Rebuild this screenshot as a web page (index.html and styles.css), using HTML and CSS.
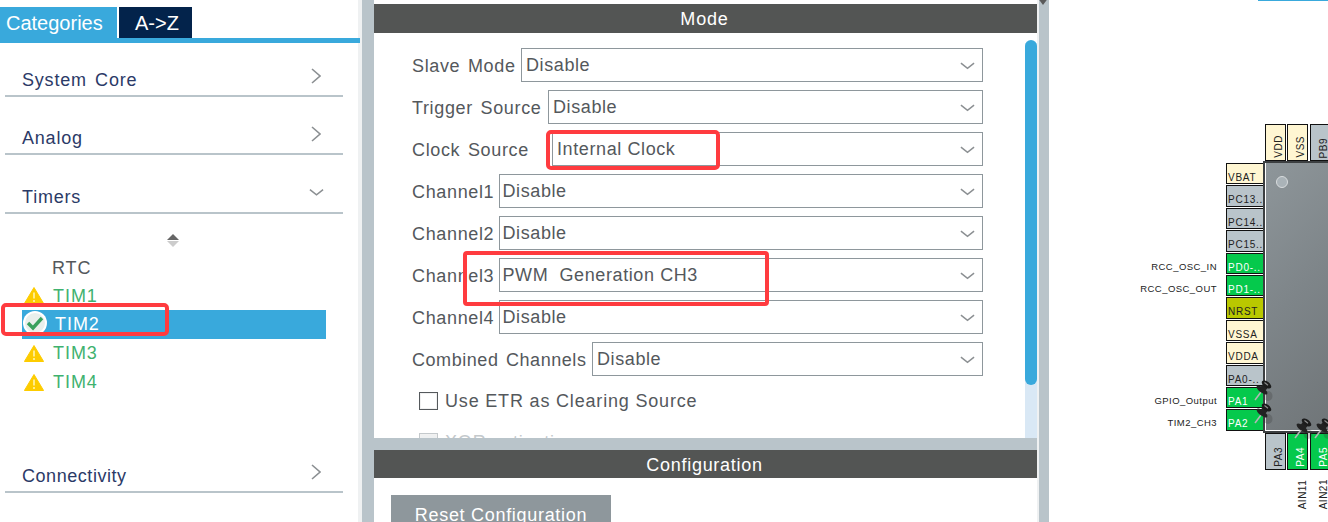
FILE: index.html
```html
<!DOCTYPE html>
<html lang="en">
<head>
<meta charset="utf-8">
<title>Pinout</title>
<link rel="stylesheet" href="styles.css">
</head>
<body>
<svg class="defs" width="0" height="0" aria-hidden="true">
  <defs>
    <symbol id="warn" viewBox="0 0 20 17">
      <path d="M10 0.5 L19.6 16.5 L0.4 16.5 Z" fill="#fdcc00" stroke="#fdcc00" stroke-linejoin="round"/>
      <path d="M10 5.5 V11.5" stroke="#fff3b0" stroke-width="1.6"/>
      <path d="M10 13 V15" stroke="#fff3b0" stroke-width="1.6"/>
    </symbol>
    <symbol id="chev-d" viewBox="0 0 16 8">
      <path d="M1 1 L8 6.5 L15 1" fill="none" stroke="#8b8f92" stroke-width="1.6"/>
    </symbol>
    <symbol id="chev-r" viewBox="0 0 10 16">
      <path d="M1 1 L9 8 L1 15" fill="none" stroke="#8b8f92" stroke-width="1.6"/>
    </symbol>
    <symbol id="pushpin" viewBox="0 0 20 24">
      <ellipse cx="15" cy="17" rx="4.5" ry="5" fill="#333" opacity="0.25"/>
      <path d="M8 13 L2 21" stroke="#b5b5b5" stroke-width="1.6"/>
      <ellipse cx="9" cy="11" rx="6.5" ry="2.6" transform="rotate(37 9 11)" fill="#222"/>
      <path d="M9 11 L13.5 5.5" stroke="#222" stroke-width="6"/>
      <ellipse cx="13.5" cy="5.5" rx="5.5" ry="3" transform="rotate(37 13.5 5.5)" fill="#1c1c1c"/>
      <path d="M11.5 3.5 L15 6.2" stroke="#8f8f8f" stroke-width="1.1"/>
    </symbol>
  </defs>
</svg>

<div class="app">
  <aside class="left">
    <div class="tabs">
      <div class="tab tab-active">Categories</div>
      <div class="tab tab-dark">A-&gt;Z</div>
    </div>
    <div class="tab-rule"></div>
    <div class="cat-list">
      <div class="cat cat-first"><span>System Core</span><svg class="chev-r"><use href="#chev-r"/></svg></div>
      <div class="cat"><span>Analog</span><svg class="chev-r"><use href="#chev-r"/></svg></div>
      <div class="cat cat-open"><span>Timers</span><svg class="chev-d"><use href="#chev-d"/></svg></div>
      <div class="sorter"><i class="tri-up"></i><i class="tri-down"></i></div>
      <ul class="items">
        <li class="item item-short"><span class="item-name item-plain">RTC</span></li>
        <li class="item item-short"><svg class="warn"><use href="#warn"/></svg><span class="item-name">TIM1</span></li>
        <li class="item item-sel">
          <svg class="ok" viewBox="0 0 24 24"><circle cx="12" cy="12" r="12" fill="#fff"/><circle cx="12" cy="12" r="10" fill="#e9efec"/><path d="M5 12 L10 17 L19 7" fill="none" stroke="#3aa15e" stroke-width="3.4"/></svg>
          <span class="item-name">TIM2</span>
        </li>
        <li class="item"><svg class="warn"><use href="#warn"/></svg><span class="item-name">TIM3</span></li>
        <li class="item"><svg class="warn"><use href="#warn"/></svg><span class="item-name">TIM4</span></li>
      </ul>
      <div class="cat cat-last"><span>Connectivity</span><svg class="chev-r"><use href="#chev-r"/></svg></div>
    </div>
    <div class="mark mark-tim"></div>
  </aside>

  <div class="splitter"></div>

  <main class="center">
    <h2 class="bar bar-mode">Mode</h2>
    <section class="mode-body">
      <div class="form">
        <div class="row"><label class="lbl w-slave">Slave Mode</label><div class="select"><span>Disable</span><svg class="chev-d"><use href="#chev-d"/></svg></div></div>
        <div class="row"><label class="lbl w-trigger">Trigger Source</label><div class="select"><span>Disable</span><svg class="chev-d"><use href="#chev-d"/></svg></div></div>
        <div class="row"><label class="lbl w-clock">Clock Source</label><div class="select"><span>Internal Clock</span><svg class="chev-d"><use href="#chev-d"/></svg></div></div>
        <div class="row"><label class="lbl w-chan">Channel1</label><div class="select"><span>Disable</span><svg class="chev-d"><use href="#chev-d"/></svg></div></div>
        <div class="row"><label class="lbl w-chan">Channel2</label><div class="select"><span>Disable</span><svg class="chev-d"><use href="#chev-d"/></svg></div></div>
        <div class="row"><label class="lbl w-chan">Channel3</label><div class="select"><span>PWM  Generation CH3</span><svg class="chev-d"><use href="#chev-d"/></svg></div></div>
        <div class="row"><label class="lbl w-chan">Channel4</label><div class="select"><span>Disable</span><svg class="chev-d"><use href="#chev-d"/></svg></div></div>
        <div class="row"><label class="lbl w-comb">Combined Channels</label><div class="select"><span>Disable</span><svg class="chev-d"><use href="#chev-d"/></svg></div></div>
        <div class="check-row"><i class="box"></i><span>Use ETR as Clearing Source</span></div>
        <div class="check-row check-off"><i class="box"></i><span>XOR activation</span></div>
      </div>
      <div class="scroll"><div class="thumb"></div></div>
    </section>
    <h2 class="bar bar-config">Configuration</h2>
    <section class="config-body">
      <button class="reset" type="button">Reset Configuration</button>
    </section>
    <div class="mark mark-clock"></div>
    <div class="mark mark-pwm"></div>
  </main>

  <div class="splitter-right"><i class="grip"></i></div>

  <section class="chip-view">
    <div class="top-rule"></div>
    <div class="chip-grid">
      <div class="pins-h pins-top">
        <div class="pin pin-v pin-power"><span>VDD</span></div>
        <div class="pin pin-v pin-power"><span>VSS</span></div>
        <div class="pin pin-v pin-grey"><span>PB9</span></div>
      </div>
      <div class="pins-left">
        <div class="pin-row"><span class="sig"></span><div class="pin pin-power">VBAT</div></div>
        <div class="pin-row"><span class="sig"></span><div class="pin pin-grey">PC13..</div></div>
        <div class="pin-row"><span class="sig"></span><div class="pin pin-grey">PC14..</div></div>
        <div class="pin-row"><span class="sig"></span><div class="pin pin-grey">PC15..</div></div>
        <div class="pin-row"><span class="sig">RCC_OSC_IN</span><div class="pin pin-green">PD0-..</div></div>
        <div class="pin-row"><span class="sig">RCC_OSC_OUT</span><div class="pin pin-green">PD1-..</div></div>
        <div class="pin-row"><span class="sig"></span><div class="pin pin-rst">NRST</div></div>
        <div class="pin-row"><span class="sig"></span><div class="pin pin-power">VSSA</div></div>
        <div class="pin-row"><span class="sig"></span><div class="pin pin-power">VDDA</div></div>
        <div class="pin-row"><span class="sig"></span><div class="pin pin-grey">PA0-..</div></div>
        <div class="pin-row"><span class="sig">GPIO_Output</span><div class="pin pin-green">PA1</div></div>
        <div class="pin-row"><span class="sig">TIM2_CH3</span><div class="pin pin-green">PA2</div></div>
      </div>
      <div class="die"><i class="dot"></i></div>
      <div class="pins-h pins-bottom">
        <div class="pin pin-v pin-grey"><span>PA3</span></div>
        <div class="pin pin-v pin-green"><span>PA4</span></div>
        <div class="pin pin-v pin-green"><span>PA5</span></div>
      </div>
      <div class="pins-h sig-bottom">
        <span class="sig-v"></span>
        <span class="sig-v">AIN11</span>
        <span class="sig-v">AIN21</span>
      </div>
      <svg class="tack tack-a"><use href="#pushpin"/></svg>
      <svg class="tack tack-b"><use href="#pushpin"/></svg>
      <svg class="tack tack-c"><use href="#pushpin"/></svg>
      <svg class="tack tack-d"><use href="#pushpin"/></svg>
    </div>
  </section>
</div>
</body>
</html>
```
FILE: styles.css
```css
* { box-sizing: border-box; }
html, body { margin: 0; padding: 0; }
body {
  width: 1328px;
  height: 522px;
  overflow: hidden;
  background: #fff;
  font-family: "Liberation Sans", Arial, sans-serif;
  color: #54585c;
}
.defs { position: absolute; }

.app { display: flex; width: 1328px; height: 522px; overflow: hidden; }

/* left panel */
.left { position: relative; width: 362px; flex: none; padding-top: 7px; background: linear-gradient(to right, #fff 358px, #eff1f2 358px); }
.tabs { display: flex; gap: 2px; height: 31px; }
.tab { height: 31px; font-size: 20px; line-height: 32px; color: #fff; }
.tab-active { width: 117px; padding-left: 6px; background: #39a9dc; }
.tab-dark { width: 73px; padding-left: 16px; background: #03234b; }
.tab-rule { width: 360px; height: 5px; background: #39a9dc; }
.cat-list { display: flex; flex-direction: column; padding-left: 5px; width: 343px; }
.cat {
  display: flex;
  justify-content: space-between;
  align-items: flex-end;
  height: 58px;
  padding: 0 22px 3px 17px;
  border-bottom: 2px solid #b9c4ca;
  font-size: 18px;
  line-height: 24px;
  letter-spacing: 0.8px;
  word-spacing: 2.5px;
  color: #2b3a67;
}
.cat-first { height: 54px; }
.cat-open { height: 59px; padding-right: 19px; }
.cat-last { letter-spacing: 0.55px; }
.chev-r { width: 10px; height: 16px; margin-bottom: 8px; }
.cat .chev-d { width: 15px; height: 9px; margin-bottom: 12px; }
.sorter { display: flex; flex-direction: column; align-items: center; gap: 1px; height: 40px; padding: 20px 0 0; width: 335px; }
.tri-up { width: 0; height: 0; border-left: 6px solid transparent; border-right: 6px solid transparent; border-bottom: 6px solid #666; }
.tri-down { width: 0; height: 0; border-left: 6px solid transparent; border-right: 6px solid transparent; border-top: 6px solid #ccc; }
.items { list-style: none; margin: 0 0 38px; padding: 0; }
.item { display: flex; align-items: center; height: 29px; margin-left: 17px; width: 304px; padding-left: 2px; font-size: 18px; letter-spacing: 0.95px; color: #3fb26f; }
.item-short { height: 28px; }
.item-short .item-name { padding-top: 1px; }
.item-name { margin-left: 9px; }
.item .item-plain { margin-left: 28px; color: #54585c; }
.warn { width: 20px; height: 17px; flex: none; margin-top: -1px; }
.item-sel { padding-left: 1px; background: #39a9dc; color: #fff; }
.ok { width: 24px; height: 24px; flex: none; margin-top: -3px; }
.item-sel .item-name { margin-left: 8px; }

/* annotations */
.mark { position: absolute; border: 4px solid #ff3b3f; border-radius: 5px; }
.mark-tim { left: 1px; top: 303px; width: 168px; height: 33px; }
.mark-clock { left: 172px; top: 130px; width: 174px; height: 40px; }
.mark-pwm { left: 89px; top: 251px; width: 306px; height: 55px; border-radius: 4px; }

.splitter { width: 12px; flex: none; background: #b9c4ca; }

/* centre */
.center { position: relative; width: 663px; flex: none; padding-top: 4px; display: flex; flex-direction: column; height: 522px; }
.bar { margin: 0; height: 29px; padding-right: 2px; background: #535554; color: #fff; text-align: center; font-weight: 400; font-size: 18px; line-height: 31px; letter-spacing: 0.85px; flex: none; }
.bar-config { height: 28px; line-height: 30px; margin-top: 12px; letter-spacing: 0.72px; }
.mode-body { display: flex; justify-content: space-between; height: 405px; flex: none; overflow: hidden; }
.form { display: flex; flex-direction: column; gap: 8px; width: 609px; padding: 15px 0 0 38px; }
.row { display: flex; align-items: center; height: 34px; flex: none; }
.lbl { flex: none; padding-top: 2px; font-size: 18px; letter-spacing: 0.65px; word-spacing: 2px; white-space: nowrap; }
.w-slave { width: 109px; }
.w-trigger { width: 136px; }
.w-clock { width: 140px; }
.w-chan { width: 87px; }
.w-comb { width: 180px; letter-spacing: 0.55px; }
.select { flex: 1; display: flex; justify-content: space-between; align-items: center; height: 34px; padding: 1px 7px 0 4px; border: 1px solid #8e979c; font-size: 18px; letter-spacing: 0.6px; background: #fff; }
.w-chan + .select { padding-left: 2.5px; }
.select span { white-space: pre; }
.select .chev-d { width: 15px; height: 8px; }
.check-row { display: flex; align-items: center; gap: 7px; height: 18px; flex: none; margin: 8px 0 0 7px; font-size: 18px; letter-spacing: 0.82px; }
.check-off { color: #c4c9cc; margin-top: 15px; }
.box { width: 19px; height: 18px; border: 1px solid #55595c; background: #fff; box-shadow: inset 0 0 0 1px #f1f1f1; }
.check-off .box { border-color: #c4c9cc; background: #eef0f1; }
.scroll { width: 12px; height: 405px; padding-top: 7px; flex: none; background: linear-gradient(to bottom, #fff 10px, #d9e8f5 10px); }
.thumb { height: 345px; background: #39a9dc; border-radius: 6px; }
.center::before { content: ""; position: absolute; left: 0; right: 0; top: 438px; height: 12px; background: #b9c4ca; }
.config-body { flex: 1; padding: 17px 0 0 17px; }
.reset { display: block; width: 220px; height: 34px; padding: 6px 0 0; border: 0; background: #8e979c; color: #fff; font-family: inherit; font-size: 18px; letter-spacing: 0.7px; line-height: 22px; text-align: center; }

.splitter-right { position: relative; width: 12px; flex: none; background: linear-gradient(to right, #eff1f2 2px, #b9c4ca 2px); overflow: hidden; }
.grip { position: absolute; left: 0; top: -3px; width: 0; height: 0; border-left: 6px solid transparent; border-right: 6px solid transparent; border-top: 8px solid #5a5a5a; }

/* chip view */
.chip-view { position: relative; flex: 1; min-width: 0; overflow: hidden; background: #fff; }
.top-rule { position: absolute; left: 209px; right: 0; top: 0; height: 1px; background: #39a9dc; }
.chip-grid {
  position: relative;
  display: grid;
  grid-template-columns: 134px 200px;
  grid-template-rows: 37px 272px 37px 38px;
  margin: 124px 0 0 80px;
  width: 334px;
}
.pins-h { display: grid; grid-auto-flow: column; grid-auto-columns: 22.4px; padding-left: 2px; grid-column: 2; }
.pins-top { grid-row: 1; }
.pins-bottom { grid-row: 3; }
.sig-bottom { grid-row: 4; padding-top: 9px; }
.pins-left { grid-column: 1; grid-row: 2; display: grid; grid-auto-rows: 22.4px; padding-top: 2px; }
.pin-row { display: flex; align-items: stretch; gap: 9px; }
.sig { width: 88px; font-size: 9.5px; letter-spacing: 0.45px; color: #222; text-align: right; white-space: nowrap; align-self: center; margin-top: 5px; }
.pin { border: 1px solid #111; margin-bottom: 1px; width: 39px; padding: 8px 0 0 1px; font-size: 10px; line-height: 12px; letter-spacing: 0.75px; color: #222; white-space: nowrap; overflow: hidden; }
.pin-power { background: #fff6d2; }
.pin-grey { background: #b9c4ca; }
.pin-green { background: #05c94c; color: #fff; }
.pin-rst { background: #b9c800; }
.pin-v { width: 21px; height: 37px; margin: 0; padding: 0 0 2px 7px; display: flex; align-items: flex-end; letter-spacing: 0.5px; }
.pin-v span, .sig-v { writing-mode: vertical-rl; transform: rotate(180deg); }
.sig-v { font-size: 10px; letter-spacing: 0.5px; color: #222; padding-right: 10px; width: 21px; line-height: 11px; }
.sig-v:last-child { padding-right: 8px; }
.die { grid-column: 2; grid-row: 2; width: 200px; height: 272px; border: 2px solid #3c3f41; background: linear-gradient(135deg, #8e969a 0%, #7e8589 35%, #65696b 100%); box-shadow: inset 1px 0 #fff, inset 0 -1px #fff; }
.dot { display: block; width: 12px; height: 12px; margin: 13px 0 0 11px; border: 1px solid #d8dcde; border-radius: 50%; background: #aab3b8; }
.tack { position: absolute; width: 20px; height: 24px; }
.tack-a { left: 124px; top: 255px; }
.tack-b { left: 124px; top: 278px; }
.tack-c { left: 164px; top: 293px; }
.tack-d { left: 184px; top: 293px; }
```
